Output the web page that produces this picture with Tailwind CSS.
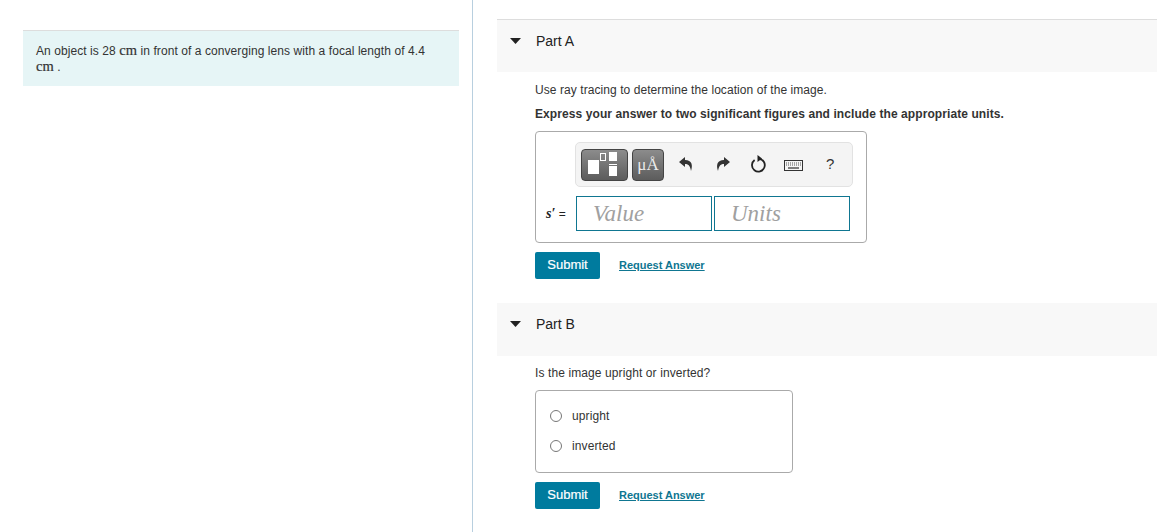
<!DOCTYPE html>
<html>
<head>
<meta charset="utf-8">
<script src="https://cdn.jsdelivr.net/npm/@tailwindcss/browser@4"></script>
</head>
<body class="bg-white overflow-hidden font-['Liberation_Sans',Arial,sans-serif] text-[#333]">
<div class="flex w-[1157px] h-[532px] overflow-hidden">
  <aside class="w-[473px] h-full shrink-0 border-r border-[#b8cfdf] pt-[30px] pl-[23px] pr-[13px]">
    <div class="h-[56px] bg-[#e6f5f6] border-t border-[#dddddd] pl-[13px] pr-[24px] pt-[12px] text-[12px] leading-[15px] tracking-[0.075px]">
      An object is 28 <span class="font-['Liberation_Serif',serif] text-[14.5px] [-webkit-text-stroke:0.2px_#333] text-[#333]">cm</span> in front of a converging lens with a focal length of 4.4 <span class="font-['Liberation_Serif',serif] text-[14.5px] [-webkit-text-stroke:0.2px_#333] text-[#333]">cm</span> .
    </div>
  </aside>
  <main class="flex-1 pt-[19px] pl-[24px]">
    <section class="h-[53px] bg-[#f8f8f8] border-t border-[#dddddd] flex items-start pt-[13px]">
      <svg class="ml-[13px] mt-[5px] w-[11px] h-[6px]" viewBox="0 0 11 6"><path d="M0 0H11L5.5 6Z" fill="#222"/></svg>
      <h2 class="ml-[15px] text-[14px] leading-[16px] text-[#222]">Part A</h2>
    </section>
    <div class="pl-[38px]">
      <p class="mt-[11px] text-[12px] leading-[14px] tracking-[0.07px]">Use ray tracing to determine the location of the image.</p>
      <p class="mt-[10px] text-[12px] leading-[14px] font-bold tracking-[0.085px]">Express your answer to two significant figures and include the appropriate units.</p>
      <div class="mt-[10px] w-[332px] h-[112px] border border-[#aaaaaa] rounded-[4px] pt-[10px]">
        <div class="ml-[39px] w-[278px] h-[45px] bg-[#f4f4f4] border border-[#e2e2e2] rounded-[5px] flex items-center pl-[5px]">
          <button class="w-[47px] h-[32px] rounded-[4px] border border-[#444] bg-gradient-to-b from-[#8c8c8c] to-[#5c5c5c] relative shrink-0">
            <span class="absolute left-[6px] top-[10px] w-[11px] h-[14px] bg-white"></span>
            <span class="absolute left-[18px] top-[3px] w-[6px] h-[8px] border border-white"></span>
            <span class="absolute left-[27px] top-[2px] w-[8px] h-[9px] bg-white"></span>
            <span class="absolute left-[27px] top-[14px] w-[8px] h-px bg-white"></span>
            <span class="absolute left-[27px] top-[16px] w-[8px] h-[10px] bg-white"></span>
          </button>
          <button class="ml-[4px] w-[32px] h-[32px] rounded-[4px] border border-[#444] bg-gradient-to-b from-[#8c8c8c] to-[#5c5c5c] shrink-0 text-[#ececec] font-['Liberation_Serif',serif] text-[17px] leading-[28px] text-center whitespace-nowrap pt-[1px]">μÅ</button>
          <svg class="ml-[15px] mb-[2px] w-[14px] h-[14px]" viewBox="0 0 14 14"><path d="M6 0 0 5l6 5V7c3 0 5 1 6 7 2-6 1-11-6-11Z" fill="#333"/></svg>
          <svg class="ml-[23px] mb-[2px] w-[14px] h-[14px]" viewBox="0 0 14 14"><path d="M8 0l6 5-6 5V7c-3 0-5 1-6 7-2-6-1-11 6-11Z" fill="#333"/></svg>
          <svg class="ml-[20px] mb-[1px] w-[16px] h-[18px]" viewBox="0 0 16 18"><path d="M4.600 5A6.400 6.400 0 1 0 9 3.800" fill="none" stroke="#222" stroke-width="1.800"/><path d="M7.500 0 12 3.500 7.500 7Z" fill="#222"/></svg>
          <svg class="ml-[18px] mt-[2px] w-[19px] h-[11px]" viewBox="0 0 19 11"><rect x=".5" y=".5" width="18" height="10" fill="#f4f4f4" stroke="#333"/><path d="M2 3H17M2 5H17" stroke="#555" stroke-dasharray="1 1" stroke-width="1"/><path d="M4 8H15" stroke="#555" stroke-width="1.500"/></svg>
          <span class="ml-[23px] mb-[2px] text-[15px] text-[#333] leading-none">?</span>
        </div>
        <div class="flex items-center mt-[9px] h-[35px]">
          <span class="w-[40px] pl-[10px] shrink-0 text-[12px] text-[#222] whitespace-nowrap"><i class="font-['Liberation_Serif',serif] font-bold text-[14px]">s′</i>&nbsp;=</span>
          <div class="w-[136px] h-[35px] border border-[#0f7691] pl-[16px] font-['Liberation_Serif',serif] italic text-[23px] leading-[33px] text-[#a0a0a0]">Value</div>
          <div class="ml-[2px] w-[136px] h-[35px] border border-[#0f7691] pl-[16px] font-['Liberation_Serif',serif] italic text-[23px] leading-[33px] text-[#a0a0a0]">Units</div>
        </div>
      </div>
      <div class="flex items-center mt-[9px] h-[27px]">
        <button class="w-[65px] h-[27px] bg-[#007b9e] rounded-[2px] text-white text-[13px] [-webkit-text-stroke:0.2px_white] leading-[24px] pb-[2px]">Submit</button>
        <a class="ml-[19px] mb-[1px] text-[#0f7691] text-[11px] font-bold underline leading-[14px] tracking-[-0.01px]">Request Answer</a>
      </div>
    </div>
    <section class="mt-[24px] h-[53px] bg-[#f8f8f8] flex items-start pt-[13px]">
      <svg class="ml-[13px] mt-[5px] w-[11px] h-[6px]" viewBox="0 0 11 6"><path d="M0 0H11L5.5 6Z" fill="#222"/></svg>
      <h2 class="ml-[15px] text-[14px] leading-[16px] text-[#222]">Part B</h2>
    </section>
    <div class="pl-[38px]">
      <p class="mt-[10px] text-[12px] leading-[14px] tracking-[0.1px]">Is the image upright or inverted?</p>
      <div class="mt-[10px] w-[258px] h-[83px] border border-[#aaaaaa] rounded-[4px] pt-[10px] pl-[14px] text-[12px] tracking-[0.1px]">
        <div class="flex items-center h-[30px]"><span class="w-[12px] h-[12px] rounded-full border border-[#777] bg-white"></span><span class="ml-[10px]">upright</span></div>
        <div class="flex items-center h-[30px]"><span class="w-[12px] h-[12px] rounded-full border border-[#777] bg-white"></span><span class="ml-[10px]">inverted</span></div>
      </div>
      <div class="flex items-center mt-[9px] h-[27px]">
        <button class="w-[65px] h-[27px] bg-[#007b9e] rounded-[2px] text-white text-[13px] [-webkit-text-stroke:0.2px_white] leading-[24px] pb-[2px]">Submit</button>
        <a class="ml-[19px] mb-[1px] text-[#0f7691] text-[11px] font-bold underline leading-[14px] tracking-[-0.01px]">Request Answer</a>
      </div>
    </div>
  </main>
</div>
</body>
</html>
